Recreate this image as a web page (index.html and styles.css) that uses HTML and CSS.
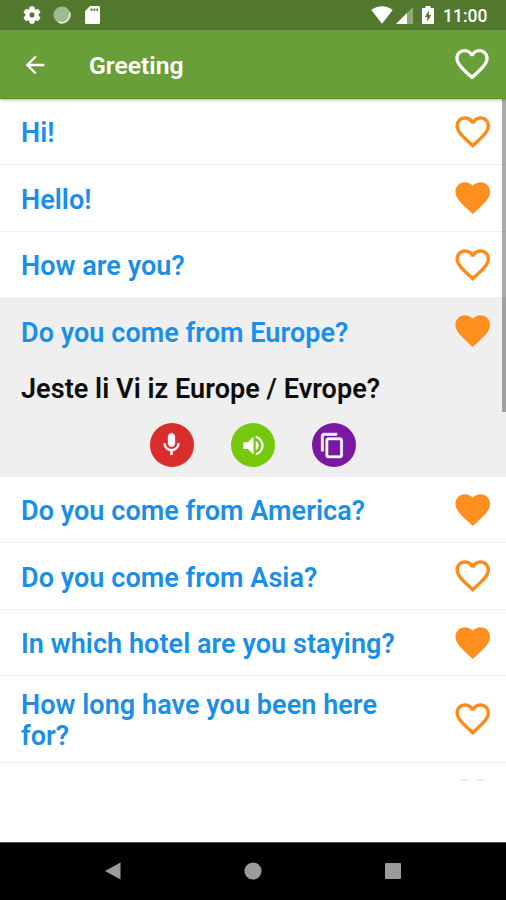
FILE: index.html
```html
<!DOCTYPE html>
<html lang="en">
<head>
<meta charset="utf-8">
<title>Greeting</title>
<link rel="stylesheet" href="styles.css">
</head>
<body>
<svg class="defs" width="0" height="0">
  <symbol id="heart" viewBox="0 0 24 24"><path d="M12 21.35l-1.45-1.32C5.4 15.36 2 12.28 2 8.5 2 5.42 4.42 3 7.5 3c1.74 0 3.41.81 4.5 2.09C13.09 3.81 14.76 3 16.5 3 19.58 3 22 5.42 22 8.5c0 3.78-3.4 6.86-8.55 11.54L12 21.35z"/></symbol>
  <symbol id="heart-o" viewBox="0 0 24 24"><path d="M16.5 3c-1.74 0-3.41.81-4.5 2.09C10.91 3.81 9.24 3 7.5 3 4.42 3 2 5.42 2 8.5c0 3.78 3.4 6.86 8.55 11.54L12 21.35l1.45-1.32C18.6 15.36 22 12.28 22 8.5 22 5.42 19.58 3 16.5 3zm-4.4 15.55l-.1.1-.1-.1C7.14 14.24 4 11.39 4 8.5 4 6.5 5.5 5 7.5 5c1.54 0 3.04.99 3.57 2.36h1.87C13.46 5.99 14.96 5 16.5 5c2 0 3.5 1.5 3.5 3.5 0 2.89-3.14 5.74-7.9 10.05z"/></symbol>
</svg>
<div class="screen">
  <header class="status">
    <div class="status-left">
      <svg class="gear" viewBox="0 0 24 24"><path d="M19.43 12.98c.04-.32.07-.64.07-.98s-.03-.66-.07-.98l2.11-1.65c.19-.15.24-.42.12-.64l-2-3.46c-.12-.22-.39-.3-.61-.22l-2.49 1c-.52-.4-1.08-.73-1.69-.98l-.38-2.65C14.46 2.18 14.25 2 14 2h-4c-.25 0-.46.18-.49.42l-.38 2.65c-.61.25-1.17.59-1.69.98l-2.49-1c-.23-.09-.49 0-.61.22l-2 3.46c-.13.22-.07.49.12.64l2.11 1.65c-.04.32-.07.65-.07.98s.03.66.07.98l-2.11 1.65c-.19.15-.24.42-.12.64l2 3.46c.12.22.39.3.61.22l2.49-1c.52.4 1.08.73 1.69.98l.38 2.65c.03.24.24.42.49.42h4c.25 0 .46-.18.49-.42l.38-2.65c.61-.25 1.17-.59 1.69-.98l2.49 1c.23.09.49 0 .61-.22l2-3.46c.12-.22.07-.49-.12-.64l-2.11-1.65zM12 15.500c-1.930 0-3.500-1.570-3.500-3.500s1.570-3.500 3.500-3.500 3.500 1.570 3.500 3.500-1.570 3.500-3.500 3.500z"/></svg>
      <svg class="sync" viewBox="0 0 18 18"><circle cx="9" cy="9" r="8.500" fill="#a3b991"/><path d="M16.400 6.200A8 8 0 0 1 5.500 16" fill="none" stroke="#e4ecdd" stroke-width="1.600"/></svg>
      <svg class="sd" viewBox="0 0 15 18"><path d="M5 0h8.500a1.500 1.500 0 0 1 1.500 1.500v15a1.500 1.500 0 0 1-1.500 1.500h-12A1.500 1.500 0 0 1 0 16.500V5.200z"/><path class="slots" d="M5.600 2.400h1.800v2.600H5.600zM8.500 2.400h1.800v2.600H8.500zM11.400 2.400h1.600v2.600h-1.600z"/></svg>
    </div>
    <div class="status-right">
      <svg class="wifi" viewBox="0 0 22 18"><path d="M11 17.700L.3 4.100Q4.900.3 11 .3t10.700 3.800z"/></svg>
      <svg class="cell" viewBox="0 0 17 17"><path d="M0 17L17 0v17z" opacity=".35"/><path d="M0 17L11 6v11z"/></svg>
      <svg class="battery" viewBox="0 0 12 18"><path d="M3.500 0h5v2H11a1 1 0 0 1 1 1v14a1 1 0 0 1-1 1H1a1 1 0 0 1-1-1V3a1 1 0 0 1 1-1h2.500z"/><path class="bolt" d="M6.800 4.600L2.800 11h2.500v4.800L9.300 9H6.800z"/></svg>
      <span class="clock">11:00</span>
    </div>
  </header>
  <div class="appbar">
    <svg class="back" viewBox="0 0 24 24"><path d="M20 11H7.830l5.590-5.590L12 4l-8 8 8 8 1.410-1.410L7.830 13H20v-2z"/></svg>
    <h1>Greeting</h1>
    <svg class="heart light"><use href="#heart-o"/></svg>
  </div>
  <main class="list">
    <div class="row"><span>Hi!</span><svg class="heart"><use href="#heart-o"/></svg></div>
    <div class="row"><span>Hello!</span><svg class="heart full"><use href="#heart"/></svg></div>
    <div class="row"><span>How are you?</span><svg class="heart"><use href="#heart-o"/></svg></div>
    <section class="open">
      <div class="row"><span>Do you come from Europe?</span><svg class="heart full"><use href="#heart"/></svg></div>
      <p class="translation">Jeste li Vi iz Europe / Evrope?</p>
      <div class="actions">
        <div class="action red"><svg class="mic" viewBox="0 0 24 24"><path d="M12 14c1.660 0 2.990-1.340 2.990-3L15 5c0-1.660-1.340-3-3-3S9 3.340 9 5v6c0 1.660 1.340 3 3 3zm5.300-3c0 3-2.540 5.100-5.300 5.100S6.700 14 6.700 11H5c0 3.410 2.720 6.230 6 6.720V21h2v-3.280c3.280-.48 6-3.300 6-6.720h-1.700z"/></svg></div>
        <div class="action green"><svg viewBox="0 0 24 24"><path d="M3 9v6h4l5 5V4L7 9H3zm13.500 3c0-1.770-1.020-3.290-2.500-4.030v8.050c1.480-.73 2.500-2.250 2.500-4.020zM14 3.230v2.060c2.890.86 5 3.540 5 6.710s-2.110 5.850-5 6.710v2.060c4.010-.91 7-4.490 7-8.770s-2.990-7.860-7-8.770z"/></svg></div>
        <div class="action purple"><svg class="copy" viewBox="0 0 24 24"><path d="M16 1H4c-1.100 0-2 .9-2 2v14h2V3h12V1zm3 4H8c-1.100 0-2 .9-2 2v14c0 1.100.9 2 2 2h11c1.100 0 2-.9 2-2V7c0-1.100-.9-2-2-2zm0 16H8V7h11v14z"/></svg></div>
      </div>
    </section>
    <div class="row"><span>Do you come from America?</span><svg class="heart full"><use href="#heart"/></svg></div>
    <div class="row"><span>Do you come from Asia?</span><svg class="heart"><use href="#heart-o"/></svg></div>
    <div class="row"><span>In which hotel are you staying?</span><svg class="heart full"><use href="#heart"/></svg></div>
    <div class="row tall"><span>How long have you been here for?</span><svg class="heart"><use href="#heart-o"/></svg></div>
    <div class="row faint"><span></span><svg class="heart"><use href="#heart-o"/></svg></div>
    <div class="scrollbar"></div>
  </main>
  <footer class="nav">
    <svg viewBox="0 0 18 18"><path d="M1 9L16.500.5v17z"/></svg>
    <svg viewBox="0 0 18 18"><circle cx="9" cy="9" r="8.600"/></svg>
    <svg viewBox="0 0 18 18"><rect x="1" y="1" width="16" height="16" rx="1"/></svg>
  </footer>
</div>
</body>
</html>
```
FILE: styles.css
```css
* { box-sizing: border-box; }
body { margin: 0; font-family: Roboto, sans-serif; background: #fff; }
svg { display: block; flex: none; }
.defs { position: absolute; }
.screen { width: 506px; height: 900px; display: flex; flex-direction: column; overflow: hidden; }

.status { height: 30px; flex: none; background: #51782d; display: flex; justify-content: space-between; padding: 0 18.500px 0 22px; fill: #fff; }
.status-left, .status-right { display: flex; align-items: center; }
.gear { width: 20px; height: 20px; margin-right: 11px; stroke: #fff; stroke-width: .8; }
.sync { width: 18px; height: 18px; margin-right: 13.500px; }
.sd { width: 15px; height: 18px; }
.slots, .bolt { fill: #51782d; }
.wifi { width: 22px; height: 18px; margin-right: 3px; }
.cell { width: 17px; height: 17px; margin-right: 9.500px; }
.battery { width: 12px; height: 18px; margin-right: 9px; }
.clock { color: #fff; font-size: 17.500px; font-weight: 500; line-height: 30px; padding-top: 2px; }

.appbar { height: 69px; flex: none; background: #689f38; border-bottom: 1px solid #59951f; display: flex; align-items: center; padding: 0 14px 0 21px; position: relative; box-shadow: 0 1px 3px rgba(0, 0, 0, .3); z-index: 1; }
.back { width: 28px; height: 28px; margin-top: 1px; fill: #fff; }
h1 { margin: 4px 0 0 40px; flex: 1; color: #fff; font-size: 24.700px; font-weight: 600; line-height: 30px; }

.heart { width: 41.500px; height: 41.500px; fill: #fb8c1e; }
.heart.full { fill: #ff9020; }
.heart.light { fill: #fff; width: 40px; height: 40px; }

.list { flex: 1; min-height: 0; position: relative; overflow: hidden; margin-top: -.5px; }
.row { height: 66.500px; display: flex; align-items: center; justify-content: space-between; padding: 0 13px 0 21px; border-bottom: 1px solid #f0f0f0; color: #1a8fe8; font-size: 27px; font-weight: 600; letter-spacing: .06px; line-height: 31.500px; }
.row span { max-width: 400px; padding-top: 5px; }
.row.tall { height: 86.500px; }
.row.faint { height: 18px; align-items: flex-start; overflow: hidden; border: 0; padding-top: 11px; opacity: .12; }
.row.faint .heart { fill: #555; }

.open { height: 178.500px; background: #efefef; }
.open .row { border-color: transparent; }
.translation { margin: 8px 21px 0; color: #0c0c0c; font-size: 27px; font-weight: 600; letter-spacing: .06px; line-height: 32px; }
.actions { display: flex; justify-content: center; gap: 37.400px; margin-top: 18.500px; }
.action { width: 44px; height: 44px; border-radius: 50%; display: flex; align-items: center; justify-content: center; }
.action svg { width: 27px; height: 27px; fill: #fff; }
.action .mic { width: 27px; height: 27px; margin-top: -1px; stroke: #fff; stroke-width: .4; }
.action .copy { margin-right: 4px; stroke: #fff; stroke-width: .5; }
.red { background: #d92c2c; }
.green { background: #76c80c; }
.purple { background: #7a18a2; }

.scrollbar { position: absolute; top: 0; right: 0; width: 4.500px; height: 313.500px; background: rgba(0, 0, 0, .33); }

.nav { height: 58px; flex: none; background: #000; border-top: 1px solid #555; display: flex; justify-content: center; align-items: center; gap: 122px; fill: #9b9b9b; padding-bottom: 2px; }
.nav svg { width: 18px; height: 18px; }
```
